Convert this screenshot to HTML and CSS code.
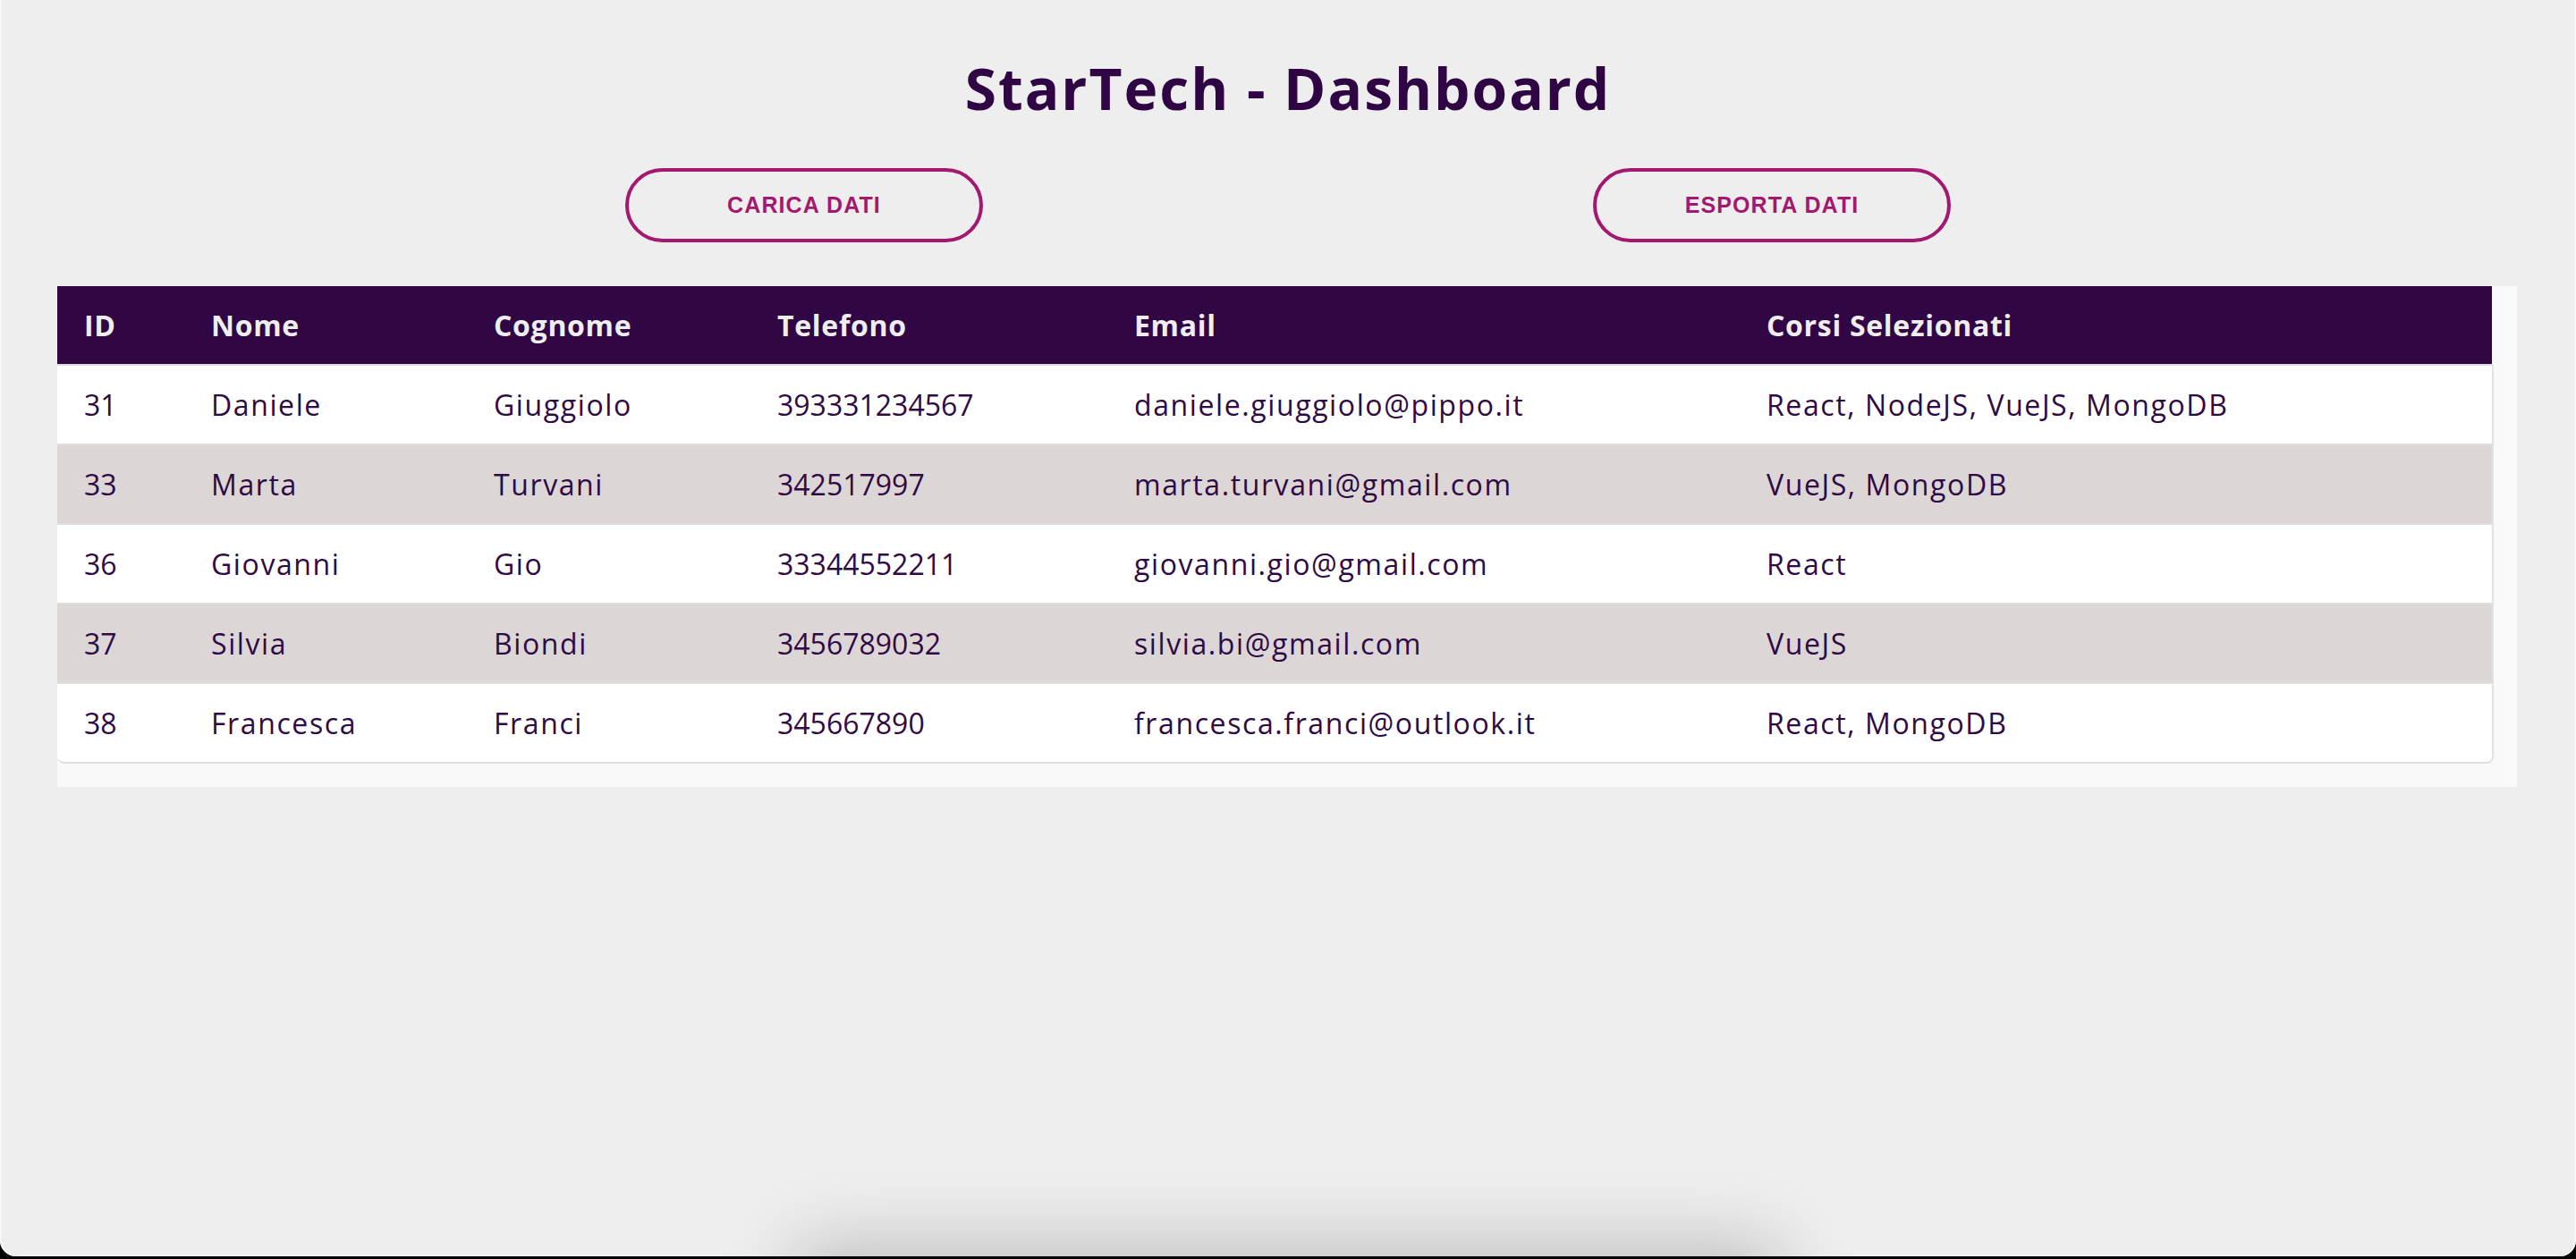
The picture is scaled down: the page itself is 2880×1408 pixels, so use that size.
FILE: index.html
```html
<!DOCTYPE html>
<html lang="it">
<head>
<meta charset="utf-8">
<title>StarTech - Dashboard</title>
<link rel="stylesheet" href="styles.css">
</head>
<body>
<div class="window">
  <h1 class="title">StarTech - Dashboard</h1>
  <div class="actions">
    <button class="btn">CARICA DATI</button>
    <button class="btn">ESPORTA DATI</button>
  </div>
  <div class="table-wrap">
    <table class="data">
      <colgroup>
        <col class="c-id"><col class="c-nome"><col class="c-cognome"><col class="c-tel"><col class="c-email"><col class="c-corsi">
      </colgroup>
      <thead>
        <tr><th>ID</th><th>Nome</th><th>Cognome</th><th>Telefono</th><th>Email</th><th>Corsi Selezionati</th></tr>
      </thead>
      <tbody>
        <tr><td class="num">31</td><td>Daniele</td><td>Giuggiolo</td><td class="num">393331234567</td><td>daniele.giuggiolo@pippo.it</td><td>React, NodeJS, VueJS, MongoDB</td></tr>
        <tr><td class="num">33</td><td>Marta</td><td>Turvani</td><td class="num">342517997</td><td>marta.turvani@gmail.com</td><td>VueJS, MongoDB</td></tr>
        <tr><td class="num">36</td><td>Giovanni</td><td>Gio</td><td class="num">33344552211</td><td>giovanni.gio@gmail.com</td><td>React</td></tr>
        <tr><td class="num">37</td><td>Silvia</td><td>Biondi</td><td class="num">3456789032</td><td>silvia.bi@gmail.com</td><td>VueJS</td></tr>
        <tr><td class="num">38</td><td>Francesca</td><td>Franci</td><td class="num">345667890</td><td>francesca.franci@outlook.it</td><td>React, MongoDB</td></tr>
      </tbody>
    </table>
  </div>
  <div class="dock-shadow"></div>
</div>
</body>
</html>
```
FILE: styles.css
```css
html, body {
  margin: 0;
  padding: 0;
  background: #000;
}

.window {
  position: relative;
  box-sizing: border-box;
  height: 1405px;
  padding-top: 55px;
  background: #eeeeee;
  border-radius: 0 0 18px 18px;
  overflow: hidden;
  box-shadow: inset 2px 0 0 #f6f6f6, inset -2px 0 0 #f6f6f6;
}

.title {
  margin: 0;
  text-align: center;
  font-family: "Open Sans", "DejaVu Sans", sans-serif;
  font-weight: 700;
  font-size: 64px;
  line-height: 88px;
  letter-spacing: 2px;
  color: #2f0643;
}

.actions {
  display: flex;
  justify-content: center;
  gap: 682px;
  margin-top: 45px;
}

.btn {
  box-sizing: border-box;
  width: 400px;
  height: 83px;
  padding: 0;
  border: 4px solid #a3196f;
  border-radius: 42px;
  background: transparent;
  color: #a3196f;
  font-family: "Liberation Sans", Arial, sans-serif;
  font-weight: 700;
  font-size: 25px;
  letter-spacing: 1.1px;
}

.table-wrap {
  width: 2724px;
  margin: 49px 0 0 64px;
  padding: 0 26px 26px 0;
  background: #f9f9f9;
}

.data {
  width: 2724px;
  table-layout: fixed;
  border-collapse: separate;
  border-spacing: 0;
  font-family: "Open Sans", "DejaVu Sans", sans-serif;
  font-size: 32px;
  line-height: 39px;
}

.c-id { width: 142px; }
.c-nome { width: 316px; }
.c-cognome { width: 317px; }
.c-tel { width: 399px; }
.c-email { width: 707px; }
.c-corsi { width: 843px; }

.data th {
  padding: 24px 29px 24px 30px;
  text-align: left;
  background: #310645;
  color: #eeeeee;
  font-weight: 700;
  letter-spacing: 0.7px;
  border-bottom: 2px solid #dcdcdc;
  white-space: nowrap;
}

.data th:last-child {
  border-right: 2px solid #f9f9f9;
}

.data td {
  padding: 24px 29px 24px 30px;
  background: #ffffff;
  color: #2f0a45;
  font-weight: 400;
  letter-spacing: 1.6px;
  border-bottom: 2px solid #e0dede;
  white-space: nowrap;
}

.data td.num {
  letter-spacing: 0;
}

.data td:last-child {
  border-right: 2px solid #e2e2e2;
}

.data tbody tr:nth-child(even) td {
  background: #dcd6d7;
}

.data tbody tr:last-child td:first-child {
  border-bottom-left-radius: 8px;
}

.data tbody tr:last-child td:last-child {
  border-bottom-right-radius: 8px;
}

.dock-shadow {
  position: absolute;
  left: 50%;
  top: 1405px;
  width: 1080px;
  height: 100px;
  margin-left: -540px;
  background: #d0d0d0;
  box-shadow: 0 0 85px 10px rgba(0, 0, 0, 0.22);
}
```
